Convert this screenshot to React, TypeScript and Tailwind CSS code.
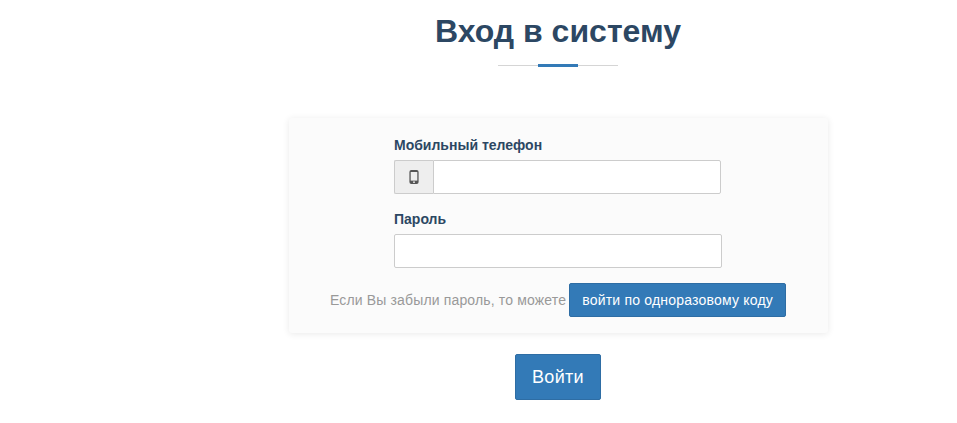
export default function App() {
  return (
    <div className="h-[423px] w-[957px] overflow-hidden bg-white pl-[159px] font-['Liberation_Sans',Arial,sans-serif]">
      <div className="flex flex-col items-center">
        <h1 className="mt-[13px] h-[36px] text-[32px] font-bold leading-[36px] text-[#2c4763]">Вход в систему</h1>
        <div className="mt-[15px] flex h-[3px] w-[120px] items-center">
          <div className="h-px flex-1 bg-[#d5d5d5]"></div>
          <div className="h-[3px] w-[40px] bg-[#337ab7]"></div>
          <div className="h-px flex-1 bg-[#d5d5d5]"></div>
        </div>
        <div className="ml-px mt-[51px] h-[215px] w-[539px] rounded-[3px] bg-[#fbfbfb] pl-[105px] pt-[18px] shadow-[0_1px_7px_rgba(0,0,0,0.09)]">
          <label className="block h-[18px] text-[14px] font-bold leading-[18px] text-[#2c4763]">Мобильный телефон</label>
          <div className="mt-[6px] flex h-[34px] w-[327px]">
            <div className="flex w-[39px] items-center justify-center rounded-l-[2px] border border-r-0 border-[#ccc] bg-[#eee]">
              <svg width="10" height="14" viewBox="0 0 10 14">
                <rect x="0.4" y="0" width="9.2" height="14" rx="2" fill="#555" />
                <rect x="1.7" y="2" width="6.6" height="8.6" fill="#eee" />
                <circle cx="5" cy="12.2" r="0.9" fill="#eee" />
              </svg>
            </div>
            <input className="min-w-0 flex-1 rounded-r-[2px] border border-[#ccc] bg-white" />
          </div>
          <label className="mt-[16px] block h-[18px] text-[14px] font-bold leading-[18px] text-[#2c4763]">Пароль</label>
          <input className="mt-[6px] block h-[34px] w-[328px] rounded-[2px] border border-[#ccc] bg-white" />
          <div className="ml-[-64px] mt-[15px] flex h-[34px] items-center">
            <span className="text-[14px] tracking-[0.15px] text-[#999]">Если Вы забыли пароль, то можете</span>
            <button className="ml-[3px] h-[34px] w-[217px] rounded-[2px] border border-[#2e6da4] bg-[#337ab7] text-[14px] tracking-[0.2px] text-white">войти по одноразовому коду</button>
          </div>
        </div>
        <button className="mt-[21px] h-[46px] w-[86px] rounded-[2px] border border-[#2e6da4] bg-[#337ab7] text-[18px] tracking-[0.3px] text-white">Войти</button>
      </div>
    </div>
  );
}
